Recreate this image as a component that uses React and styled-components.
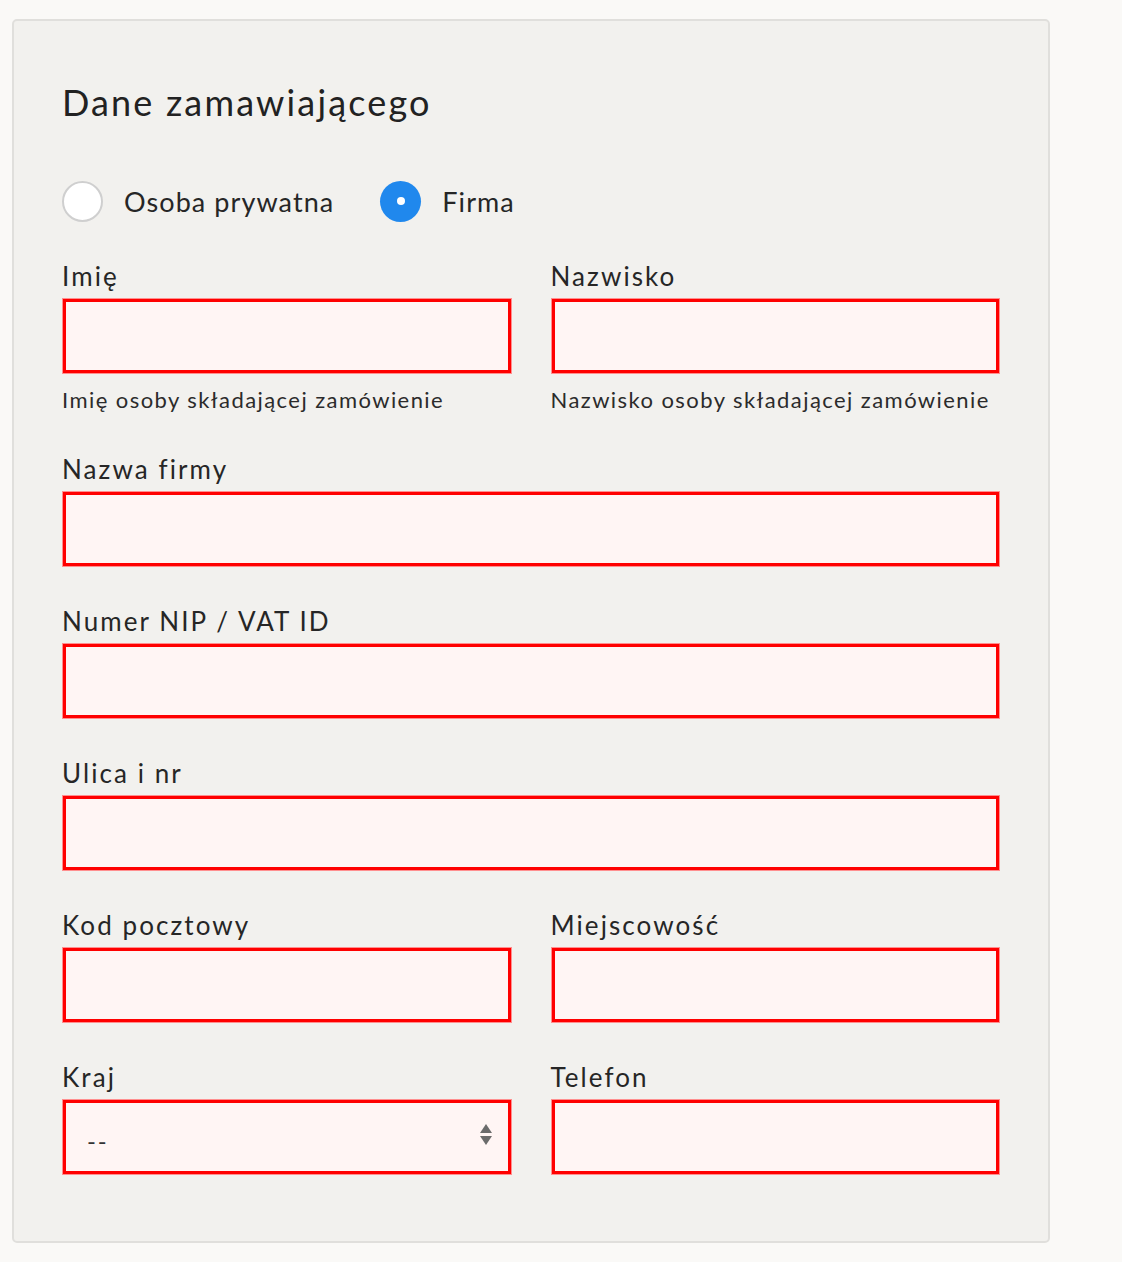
import React, { useState } from 'react';
import styled, { createGlobalStyle } from 'styled-components';

const GlobalStyle = createGlobalStyle`
  html, body {
    margin: 0;
    background: #faf9f7;
  }
  body {
    font-family: Lato, "Noto Sans", sans-serif;
    color: #262626;
  }
`;

const Page = styled.div`
  padding: 19px 0 20px 12px;
`;

const Card = styled.section`
  box-sizing: border-box;
  width: 1038px;
  background: #f2f1ee;
  border: 2px solid #e0dfdc;
  border-radius: 5px;
  padding: 59px 48px 66px 48px;
`;

const Title = styled.h2`
  margin: 0;
  font-size: 36px;
  font-weight: 400;
  line-height: 44px;
  letter-spacing: 0.06em;
  color: #222;
`;

const Radios = styled.div`
  display: flex;
  align-items: center;
  gap: 46px;
  margin-top: 57px;
  height: 40px;
`;

const RadioLabel = styled.label`
  display: flex;
  align-items: center;
  gap: 21px;
  font-size: 27px;
  letter-spacing: 0.04em;
  cursor: pointer;
`;

const RadioDot = styled.span`
  box-sizing: border-box;
  width: 41px;
  height: 41px;
  border-radius: 50%;
  display: flex;
  align-items: center;
  justify-content: center;
  background: ${p => (p.$checked ? '#2088ed' : '#fff')};
  border: ${p => (p.$checked ? 'none' : '2px solid #cfcfcf')};

  &::after {
    content: '';
    display: ${p => (p.$checked ? 'block' : 'none')};
    width: 8px;
    height: 8px;
    border-radius: 50%;
    background: #fff;
  }
`;

const Grid = styled.div`
  display: grid;
  grid-template-columns: 1fr 1fr;
  column-gap: 39px;
  row-gap: 38px;
  margin-top: 39px;
`;

const Field = styled.div`
  display: flex;
  flex-direction: column;
  grid-column: ${p => (p.$wide ? '1 / span 2' : 'auto')};
`;

const Label = styled.span`
  font-size: 26px;
  line-height: 32px;
  letter-spacing: 0.08em;
  margin-bottom: 6px;
`;

const Input = styled.input`
  box-sizing: border-box;
  width: 100%;
  height: 76px;
  margin: 0;
  background: #fff5f4;
  border: 1px solid #ff8f8f;
  box-shadow: inset 0 0 0 3px #ff0000;
  outline: none;
  padding: 0 24px;
  font: inherit;
  font-size: 24px;
`;

const SelectWrap = styled.div`
  position: relative;
`;

const Select = styled.select`
  box-sizing: border-box;
  width: 100%;
  height: 76px;
  margin: 0;
  appearance: none;
  background: #fff5f4;
  border: 1px solid #ff8f8f;
  box-shadow: inset 0 0 0 3px #ff0000;
  outline: none;
  padding: 6px 24px 0;
  font-family: inherit;
  font-size: 24px;
  letter-spacing: 0.08em;
  color: #333;
`;

const Arrows = styled.svg`
  position: absolute;
  right: 19px;
  top: 24px;
  pointer-events: none;
`;

const Help = styled.span`
  font-size: 22px;
  line-height: 28px;
  letter-spacing: 0.065em;
  margin-top: 12px;
  margin-bottom: 1px;
  color: #2b2b2b;
`;

export default function App() {
  const [type, setType] = useState('firma');

  return (
    <Page>
      <GlobalStyle />
      <Card>
        <Title>Dane zamawiającego</Title>

        <Radios>
          <RadioLabel onClick={() => setType('prywatna')}>
            <RadioDot $checked={type === 'prywatna'} />
            Osoba prywatna
          </RadioLabel>
          <RadioLabel onClick={() => setType('firma')}>
            <RadioDot $checked={type === 'firma'} />
            Firma
          </RadioLabel>
        </Radios>

        <Grid>
          <Field>
            <Label>Imię</Label>
            <Input />
            <Help>Imię osoby składającej zamówienie</Help>
          </Field>
          <Field>
            <Label>Nazwisko</Label>
            <Input />
            <Help>Nazwisko osoby składającej zamówienie</Help>
          </Field>

          <Field $wide>
            <Label>Nazwa firmy</Label>
            <Input />
          </Field>
          <Field $wide>
            <Label>Numer NIP / VAT ID</Label>
            <Input />
          </Field>
          <Field $wide>
            <Label>Ulica i nr</Label>
            <Input />
          </Field>

          <Field>
            <Label>Kod pocztowy</Label>
            <Input />
          </Field>
          <Field>
            <Label>Miejscowość</Label>
            <Input />
          </Field>

          <Field>
            <Label>Kraj</Label>
            <SelectWrap>
              <Select defaultValue="">
                <option value="">--</option>
                <option value="pl">Polska</option>
              </Select>
              <Arrows width="14" height="24" viewBox="0 0 14 24">
                <path d="M7 1 L13 10 L1 10 Z" fill="#6b6b6b" />
                <path d="M1 13 L13 13 L7 22 Z" fill="#6b6b6b" />
              </Arrows>
            </SelectWrap>
          </Field>
          <Field>
            <Label>Telefon</Label>
            <Input />
          </Field>
        </Grid>
      </Card>
    </Page>
  );
}
